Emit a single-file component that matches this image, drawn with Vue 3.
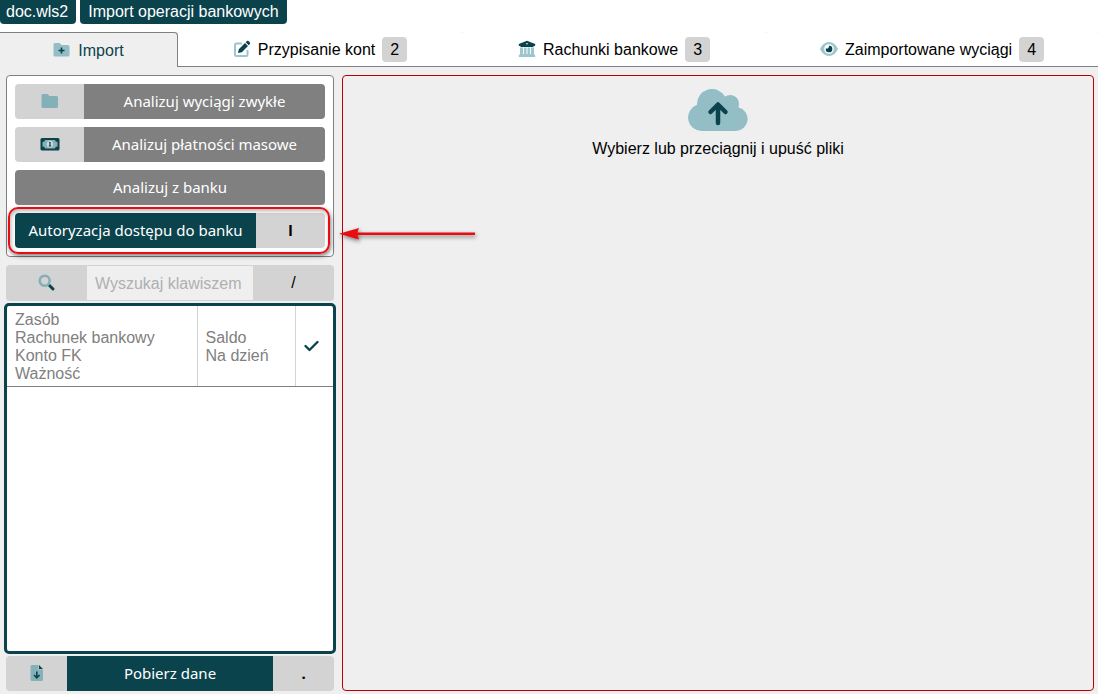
<script setup>
import { ref } from 'vue'

const active = ref('import')
const query = ref('')
const tabs = [
  { id: 'import', label: 'Import', icon: 'folder' },
  { id: 'assign', label: 'Przypisanie kont', icon: 'edit', key: '2' },
  { id: 'accounts', label: 'Rachunki bankowe', icon: 'bank', key: '3' },
  { id: 'statements', label: 'Zaimportowane wyciągi', icon: 'eye', key: '4' },
]
</script>

<template>
  <div class="page">
    <header class="titles">
      <span class="title">doc.wls2</span>
      <h1 class="title">Import operacji bankowych</h1>
    </header>

    <nav class="tabs">
      <button
        v-for="tab in tabs"
        :key="tab.id"
        type="button"
        class="tab"
        :class="{ active: active === tab.id }"
        @click="active = tab.id"
      >
        <svg v-if="tab.icon === 'folder'" class="icon" viewBox="0 0 18 18" aria-hidden="true">
          <path class="light" d="M1.500 2H6.500L8.500 4H15Q16.500 4 16.500 5.500V14Q16.500 15.500 15 15.500H2Q.5 15.500 .5 14V3.500Q.5 2 1.500 2Z" />
          <path class="line" d="M8.500 6.500V12.500M5.500 9.500H11.500" />
        </svg>
        <svg v-else-if="tab.icon === 'edit'" class="icon" viewBox="0 0 18 18" aria-hidden="true">
          <path class="pale-line" d="M9 3.500H3.500Q2 3.500 2 5V14.500Q2 16 3.500 16H13Q14.500 16 14.500 14.500V10" />
          <path class="dark" d="M5 13L5.800 9.200L12 3L15 6L8.800 12.200ZM12.700 2.300L13.900 1.100Q14.700.4 15.500 1.100L16.900 2.500Q17.600 3.300 16.900 4.100L15.700 5.300Z" />
        </svg>
        <svg v-else-if="tab.icon === 'bank'" class="icon" viewBox="0 0 18 18" aria-hidden="true">
          <path class="pale" d="M2 7.500H5V14H6V7.500H8.500V14H9.500V7.500H12V14H13V7.500H16V14L17.200 15.500V17H.8V15.500L2 14Z" />
          <path class="dark" fill-rule="evenodd" d="M9 .7L17.200 4V5.300Q17.200 6 16.500 6H15.500V7H2.500V6H1.500Q.8 6 .8 5.300V4ZM9 3A.8 .8 0 1 0 9 4.600A.8 .8 0 1 0 9 3Z" />
        </svg>
        <svg v-else class="icon" viewBox="0 0 18 18" aria-hidden="true">
          <path class="pale" d="M0 9Q3.200 2 9 2T18 9Q14.800 16 9 16T0 9Z" />
          <circle cx="9" cy="9" r="4.800" fill="#fff" />
          <path class="dark" d="M9 5.700A3.300 3.300 0 1 1 5.800 8.400Q8.800 9.200 9 5.700Z" />
        </svg>
        <span class="label">{{ tab.label }}</span>
        <kbd v-if="tab.key" class="badge">{{ tab.key }}</kbd>
      </button>
    </nav>

    <main class="content">
      <section class="side">
        <div class="panel">
          <button type="button" class="action muted">
            <span class="cell">
              <svg class="icon" viewBox="0 0 18 18" aria-hidden="true">
                <path class="mid" d="M1.500 2H6.500L8.500 4H15.500Q17 4 17 5.500V14.500Q17 16 15.500 16H2Q.5 16 .5 14.500V3.500Q.5 2 1.500 2Z" />
              </svg>
            </span>
            <span class="caption">Analizuj wyciągi zwykłe</span>
          </button>
          <button type="button" class="action muted">
            <span class="cell">
              <svg class="icon wide" viewBox="0 0 20 18" aria-hidden="true">
                <rect class="dark" x=".5" y="3" width="19" height="12.500" rx="1.500" />
                <path class="mid" d="M5 5H15Q15 7 17.500 7V11.500Q15 11.500 15 13.500H5Q5 11.500 2.500 11.500V7Q5 7 5 5Z" />
                <ellipse cx="10" cy="9.200" rx="3.200" ry="3.500" fill="#d3d3d3" />
                <path d="M9 7.500H10V11M8.800 11H11.200" fill="none" stroke="#0b434d" stroke-width="1.200" />
              </svg>
            </span>
            <span class="caption">Analizuj płatności masowe</span>
          </button>
          <button type="button" class="action muted">
            <span class="caption">Analizuj z banku</span>
          </button>
          <div class="highlighted">
            <button type="button" class="action">
              <span class="caption">Autoryzacja dostępu do banku</span>
              <kbd class="cell strong">l</kbd>
            </button>
            <span class="outline"></span>
            <svg class="arrow" width="142" height="24" viewBox="0 0 142 24" aria-hidden="true">
              <path d="M17 10.500H136V13H17ZM0 11.700L20 6L18 11.700L20 17.500Z" fill="#e90d12" />
            </svg>
          </div>
        </div>

        <div class="search">
          <label class="cell" for="query" aria-label="Wyszukaj">
            <svg class="icon" viewBox="0 0 18 18" aria-hidden="true">
              <path d="M11.500 11.500L15 15" fill="none" stroke="#0b434d" stroke-width="3" stroke-linecap="round" />
              <circle cx="6.700" cy="6.700" r="5" fill="none" stroke="#84b0b8" stroke-width="2.600" />
            </svg>
          </label>
          <input id="query" v-model="query" type="text" placeholder="Wyszukaj klawiszem" />
          <kbd class="cell">/</kbd>
        </div>

        <div class="list">
          <table>
            <thead>
              <tr>
                <th class="resource">Zasób<br />Rachunek bankowy<br />Konto FK<br />Ważność</th>
                <th class="balance">Saldo<br />Na dzień</th>
                <th class="check">
                  <svg class="icon" viewBox="0 0 18 18" aria-hidden="true">
                    <path d="M2.500 9L6.500 13L14.500 5" fill="none" stroke="#0b434d" stroke-width="2.400" stroke-linecap="round" stroke-linejoin="round" />
                  </svg>
                </th>
              </tr>
            </thead>
          </table>
        </div>

        <button type="button" class="action download">
          <span class="cell">
            <svg class="icon" viewBox="0 0 18 18" aria-hidden="true">
              <path class="mid" d="M4 1H10.500V5.500H15V15.500Q15 17 13.500 17H4Q2.500 17 2.500 15.500V2.500Q2.500 1 4 1Z" />
              <path class="dark" d="M11 1L15 5H11Z" />
              <path class="line" d="M8.800 7.500V13.500M6 11L8.800 13.800L11.600 11" />
            </svg>
          </span>
          <span class="caption">Pobierz dane</span>
          <kbd class="cell strong">.</kbd>
        </button>
      </section>

      <button type="button" class="drop">
        <svg class="cloud" width="60" height="42" viewBox="0 0 60 42" aria-hidden="true">
          <path class="cloud-shape" d="M13.500 42A13.500 13.500 0 0 1 9 15.800V15A15 15 0 0 1 37 7.500A9 9 0 0 1 51 15Q51 17 50.300 18.300A12 12 0 0 1 48 42Z" />
          <path d="M30 34V16M22.500 23L30 15.500L37.500 23" fill="none" stroke="#0b434d" stroke-width="4.500" stroke-linecap="round" stroke-linejoin="round" />
        </svg>
        <span>Wybierz lub przeciągnij i upuść pliki</span>
      </button>
    </main>
  </div>
</template>

<style>
body {
  background: #fff;
}
</style>

<style scoped>
.page {
  box-sizing: border-box;
  display: flex;
  flex-direction: column;
  min-height: 100vh;
  color: #000;
  font: 16px/18px "Liberation Sans", Arial, sans-serif;
}
.page * {
  box-sizing: border-box;
}
button, input, kbd {
  margin: 0;
  border: 0;
  padding: 0;
  color: inherit;
  font: inherit;
}
button {
  cursor: pointer;
}
.titles {
  display: flex;
  gap: 4px;
  margin-bottom: 8px;
}
.title {
  margin: 0;
  padding: 3px 8px;
  border-radius: 0 0 4px 4px;
  background: #0b434d;
  color: #fff;
  font-size: 16px;
  font-weight: normal;
  line-height: 18px;
}
.title:first-child {
  padding-left: 6px;
}
.tabs {
  display: grid;
  grid-template-columns: 178fr 284fr 304fr 332fr;
  background: #efefef;
}
.tab {
  display: flex;
  align-items: center;
  justify-content: center;
  gap: 7px;
  height: 35px;
  border-bottom: 1px solid #808080;
  border-radius: 2px 2px 0 0;
  background: #fff;
}
.tab.active {
  border: 1px solid #808080;
  border-width: 1px 1px 0 0;
  border-radius: 0 4px 0 0;
  background: #efefef;
  color: #0b434d;
}
.label {
  padding-top: 2px;
}
.icon {
  display: block;
  flex: none;
  width: 18px;
  height: 18px;
}
.icon.wide {
  width: 20px;
}
.light, .cloud-shape {
  fill: #94bec6;
}
.pale {
  fill: #9dc6ce;
}
.mid {
  fill: #84b0b8;
}
.dark {
  fill: #0b434d;
}
.line {
  fill: none;
  stroke: #0b434d;
  stroke-width: 1.6;
}
.pale-line {
  fill: none;
  stroke: #9dc6ce;
  stroke-width: 2;
}
.badge {
  padding: 3px 8px;
  border-radius: 4px;
  background: #d3d3d3;
  line-height: 19px;
}
.content {
  display: grid;
  flex: 1;
  grid-template-columns: 328px 1fr;
  gap: 8px;
  padding: 8px 4px 3px 6px;
  background: #efefef;
}
.side {
  display: flex;
  flex-direction: column;
  min-width: 0;
}
.panel {
  display: flex;
  flex-direction: column;
  gap: 8px;
  margin-bottom: 8px;
  padding: 8px;
  border: 1px solid #808080;
  border-radius: 4px;
  background: #fff;
}
.action {
  display: flex;
  width: 100%;
  height: 35px;
  overflow: hidden;
  border-radius: 4px;
  background: transparent;
  color: #fff;
  font-family: "Noto Sans", sans-serif;
  font-size: 15px;
}
.cell {
  display: flex;
  flex: none;
  align-items: center;
  justify-content: center;
  width: 69px;
  height: 100%;
  background: #d3d3d3;
  color: #000;
}
.action .cell {
  padding-bottom: 1px;
}
.cell.strong {
  font-weight: bold;
}
.caption {
  flex: 1;
  height: 100%;
  background: #0b434d;
  line-height: 34px;
}
.muted .caption {
  background: #808080;
}
.highlighted {
  position: relative;
}
.outline {
  position: absolute;
  inset: -6px -5px -6px -7px;
  border: 2px solid #e90d12;
  border-radius: 10px;
  box-shadow: 1px 2px 4px rgba(0, 0, 0, 0.5), inset 1px 2px 4px rgba(0, 0, 0, 0.3);
  pointer-events: none;
}
.arrow {
  position: absolute;
  top: 9px;
  left: 324px;
  filter: drop-shadow(1px 2px 2px rgba(0, 0, 0, 0.5));
  pointer-events: none;
}
.search {
  display: flex;
  height: 36px;
  margin-bottom: 2px;
  overflow: hidden;
  border-radius: 4px;
}
.search .cell {
  width: 81px;
}
.search input {
  flex: 1;
  min-width: 0;
  padding: 2px 8px 0;
  border: 1px solid #d3d3d3;
  border-width: 1px 0;
  outline: 0;
  background: #efefef;
}
.search input::placeholder {
  color: #b0b0b0;
  opacity: 1;
}
.list {
  flex: 1;
  margin: 0 -2px 2px;
  border: 3px solid #0b434d;
  border-radius: 5px;
  background: #fff;
}
table {
  width: 100%;
  border-collapse: collapse;
  table-layout: fixed;
  color: #808080;
}
th {
  padding: 5px 8px 3px;
  border-bottom: 1px solid #808080;
  font-weight: normal;
  text-align: left;
}
th + th {
  border-left: 1px solid #d3d3d3;
}
.balance {
  width: 98px;
}
.check {
  width: 38px;
}
th.check {
  padding: 0 7px;
}
.download .cell {
  width: 61px;
}
.drop {
  display: flex;
  flex-direction: column;
  align-items: center;
  gap: 9px;
  min-width: 0;
  padding: 13px 8px;
  border: 1px solid #b80000;
  border-radius: 4px;
  background: transparent;
}
</style>
